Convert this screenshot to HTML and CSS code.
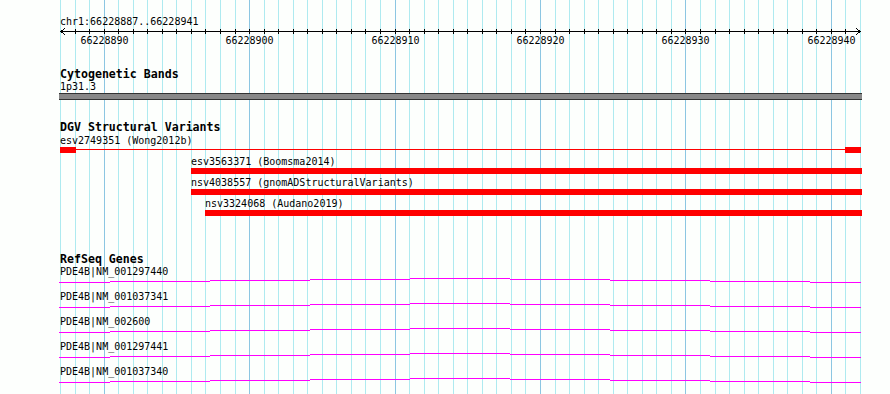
FILE: index.html
```html
<!DOCTYPE html>
<html lang="en">
<head>
  <meta charset="UTF-8">
  <title>chr1:66228887..66228941</title>
  <link rel="stylesheet" href="styles.css">
</head>
<body>
  <main class="panel">
    <!-- one line per base pair, darker every 10 bp -->
    <svg class="grid" width="890" height="394">
      <path class="minor" d="M60.5 0V394M75.5 0V394M89.5 0V394M118.5 0V394M133.5 0V394M147.5 0V394M162.5 0V394M176.5 0V394M191.5 0V394M205.5 0V394M220.5 0V394M235.5 0V394M264.5 0V394M278.5 0V394M293.5 0V394M307.5 0V394M322.5 0V394M336.5 0V394M351.5 0V394M365.5 0V394M380.5 0V394M409.5 0V394M424.5 0V394M438.5 0V394M453.5 0V394M467.5 0V394M482.5 0V394M496.5 0V394M511.5 0V394M525.5 0V394M555.5 0V394M569.5 0V394M584.5 0V394M598.5 0V394M613.5 0V394M627.5 0V394M642.5 0V394M656.5 0V394M671.5 0V394M700.5 0V394M715.5 0V394M729.5 0V394M744.5 0V394M758.5 0V394M773.5 0V394M787.5 0V394M802.5 0V394M816.5 0V394M845.5 0V394M860.5 0V394"/>
      <path class="major" d="M104.5 0V394M249.5 0V394M395.5 0V394M540.5 0V394M685.5 0V394M831.5 0V394"/>
    </svg>

    <div class="tracks">
      <div class="locus">chr1:66228887..66228941</div>

      <svg class="ruler" width="890" height="20">
        <path class="axis" d="M60 3.5H861M65 0.5L60.5 3.5L65 6.5M856 0.5L860.5 3.5L856 6.5"/>
        <path class="axis" d="M75.5 1V6M89.5 1V6M104.5 1V6M118.5 1V6M133.5 1V6M147.5 1V6M162.5 1V6M176.5 1V6M191.5 1V6M205.5 1V6M220.5 1V6M235.5 1V6M249.5 1V6M264.5 1V6M278.5 1V6M293.5 1V6M307.5 1V6M322.5 1V6M336.5 1V6M351.5 1V6M365.5 1V6M380.5 1V6M395.5 1V6M409.5 1V6M424.5 1V6M438.5 1V6M453.5 1V6M467.5 1V6M482.5 1V6M496.5 1V6M511.5 1V6M525.5 1V6M540.5 1V6M555.5 1V6M569.5 1V6M584.5 1V6M598.5 1V6M613.5 1V6M627.5 1V6M642.5 1V6M656.5 1V6M671.5 1V6M685.5 1V6M700.5 1V6M715.5 1V6M729.5 1V6M744.5 1V6M758.5 1V6M773.5 1V6M787.5 1V6M802.5 1V6M816.5 1V6M831.5 1V6M845.5 1V6"/>
        <text x="104.5" y="16">66228890</text>
        <text x="249.5" y="16">66228900</text>
        <text x="395.5" y="16">66228910</text>
        <text x="540.5" y="16">66228920</text>
        <text x="685.5" y="16">66228930</text>
        <text x="831.5" y="16">66228940</text>
      </svg>

      <section class="track cyto">
        <h2 class="track-title">Cytogenetic Bands</h2>
        <div class="band-label">1p31.3</div>
        <div class="band"></div>
      </section>

      <section class="track dgv">
        <h2 class="track-title">DGV Structural Variants</h2>
        <div class="variant">
          <div class="label" style="margin-left: 60px">esv2749351 (Wong2012b)</div>
          <div class="split" style="margin-left: 60px; width: 801px">
            <span class="box"></span>
            <span class="gap-line"></span>
            <span class="box"></span>
          </div>
        </div>
        <div class="variant">
          <div class="label" style="margin-left: 191px">esv3563371 (Boomsma2014)</div>
          <div class="bar" style="margin-left: 191px; width: 671px"></div>
        </div>
        <div class="variant">
          <div class="label" style="margin-left: 191px">nsv4038557 (gnomADStructuralVariants)</div>
          <div class="bar" style="margin-left: 191px; width: 671px"></div>
        </div>
        <div class="variant">
          <div class="label" style="margin-left: 205px">nsv3324068 (Audano2019)</div>
          <div class="bar" style="margin-left: 205px; width: 657px"></div>
        </div>
      </section>

      <section class="track refseq">
        <h2 class="track-title">RefSeq Genes</h2>
        <div class="gene">
          <div class="gene-label">PDE4B|NM_001297440</div>
          <svg class="transcript" width="890" height="14"><path d="M59 5.5H110M110 4.5H210M210 3.5H310M310 2.5H410M410 1.5H510M510 2.5H610M610 3.5H710M710 4.5H810M810 5.5H861"/></svg>
        </div>
        <div class="gene">
          <div class="gene-label">PDE4B|NM_001037341</div>
          <svg class="transcript" width="890" height="14"><path d="M59 5.5H110M110 4.5H210M210 3.5H310M310 2.5H410M410 1.5H510M510 2.5H610M610 3.5H710M710 4.5H810M810 5.5H861"/></svg>
        </div>
        <div class="gene">
          <div class="gene-label">PDE4B|NM_002600</div>
          <svg class="transcript" width="890" height="14"><path d="M59 5.5H110M110 4.5H210M210 3.5H310M310 2.5H410M410 1.5H510M510 2.5H610M610 3.5H710M710 4.5H810M810 5.5H861"/></svg>
        </div>
        <div class="gene">
          <div class="gene-label">PDE4B|NM_001297441</div>
          <svg class="transcript" width="890" height="14"><path d="M59 5.5H110M110 4.5H210M210 3.5H310M310 2.5H410M410 1.5H510M510 2.5H610M610 3.5H710M710 4.5H810M810 5.5H861"/></svg>
        </div>
        <div class="gene">
          <div class="gene-label">PDE4B|NM_001037340</div>
          <svg class="transcript" width="890" height="14"><path d="M59 5.5H110M110 4.5H210M210 3.5H310M310 2.5H410M410 1.5H510M510 2.5H610M610 3.5H710M710 4.5H810M810 5.5H861"/></svg>
        </div>
      </section>
    </div>
  </main>
</body>
</html>
```

FILE: styles.css
```css
body {
  margin: 0;
  background: #fdfffd;
  font-family: 'DejaVu Sans Mono', 'Liberation Mono', monospace;
  font-size: 10px;
  color: #000;
}

.panel {
  display: grid;
  width: 890px;
  height: 394px;
  overflow: hidden;
}

.panel > * {
  grid-area: 1 / 1;
}

svg {
  display: block;
  shape-rendering: crispEdges;
}

.grid path {
  stroke-width: 1;
  fill: none;
}

.grid .minor {
  stroke: #aeeaf0;
}

.grid .major {
  stroke: #8cc6e2;
}

.locus {
  padding: 15px 0 0 60px;
  line-height: 13px;
}

.ruler .axis {
  stroke: #000;
  fill: none;
}

.ruler text {
  font-family: 'DejaVu Sans Mono', monospace;
  font-size: 10px;
  text-anchor: middle;
  fill: #000;
}

.track-title {
  margin: 0;
  padding-left: 60px;
  font-size: 11.6px;
  font-weight: bold;
  line-height: 13px;
}

.cyto {
  margin-top: 20px;
}

.band-label {
  padding-left: 60px;
  line-height: 12px;
}

.band {
  margin-left: 59px;
  width: 803px;
  height: 5px;
  background: #888;
  border-top: 1px solid #333;
  border-bottom: 1px solid #333;
}

.dgv {
  margin-top: 21px;
}

.variant + .variant {
  margin-top: 2px;
}

.label {
  line-height: 13px;
  white-space: nowrap;
}

.bar {
  height: 6px;
  background: #ff0000;
}

.split {
  display: flex;
  height: 6px;
}

.split .box {
  width: 16px;
  background: #ff0000;
}

.split .gap-line {
  flex: 1;
  margin-top: 2px;
  height: 1px;
  background: #ff0000;
}

.refseq {
  margin-top: 37px;
}

.gene-label {
  padding-left: 60px;
  line-height: 11px;
}

.transcript path {
  stroke: #ff00ff;
  stroke-width: 1;
  fill: none;
}
```
